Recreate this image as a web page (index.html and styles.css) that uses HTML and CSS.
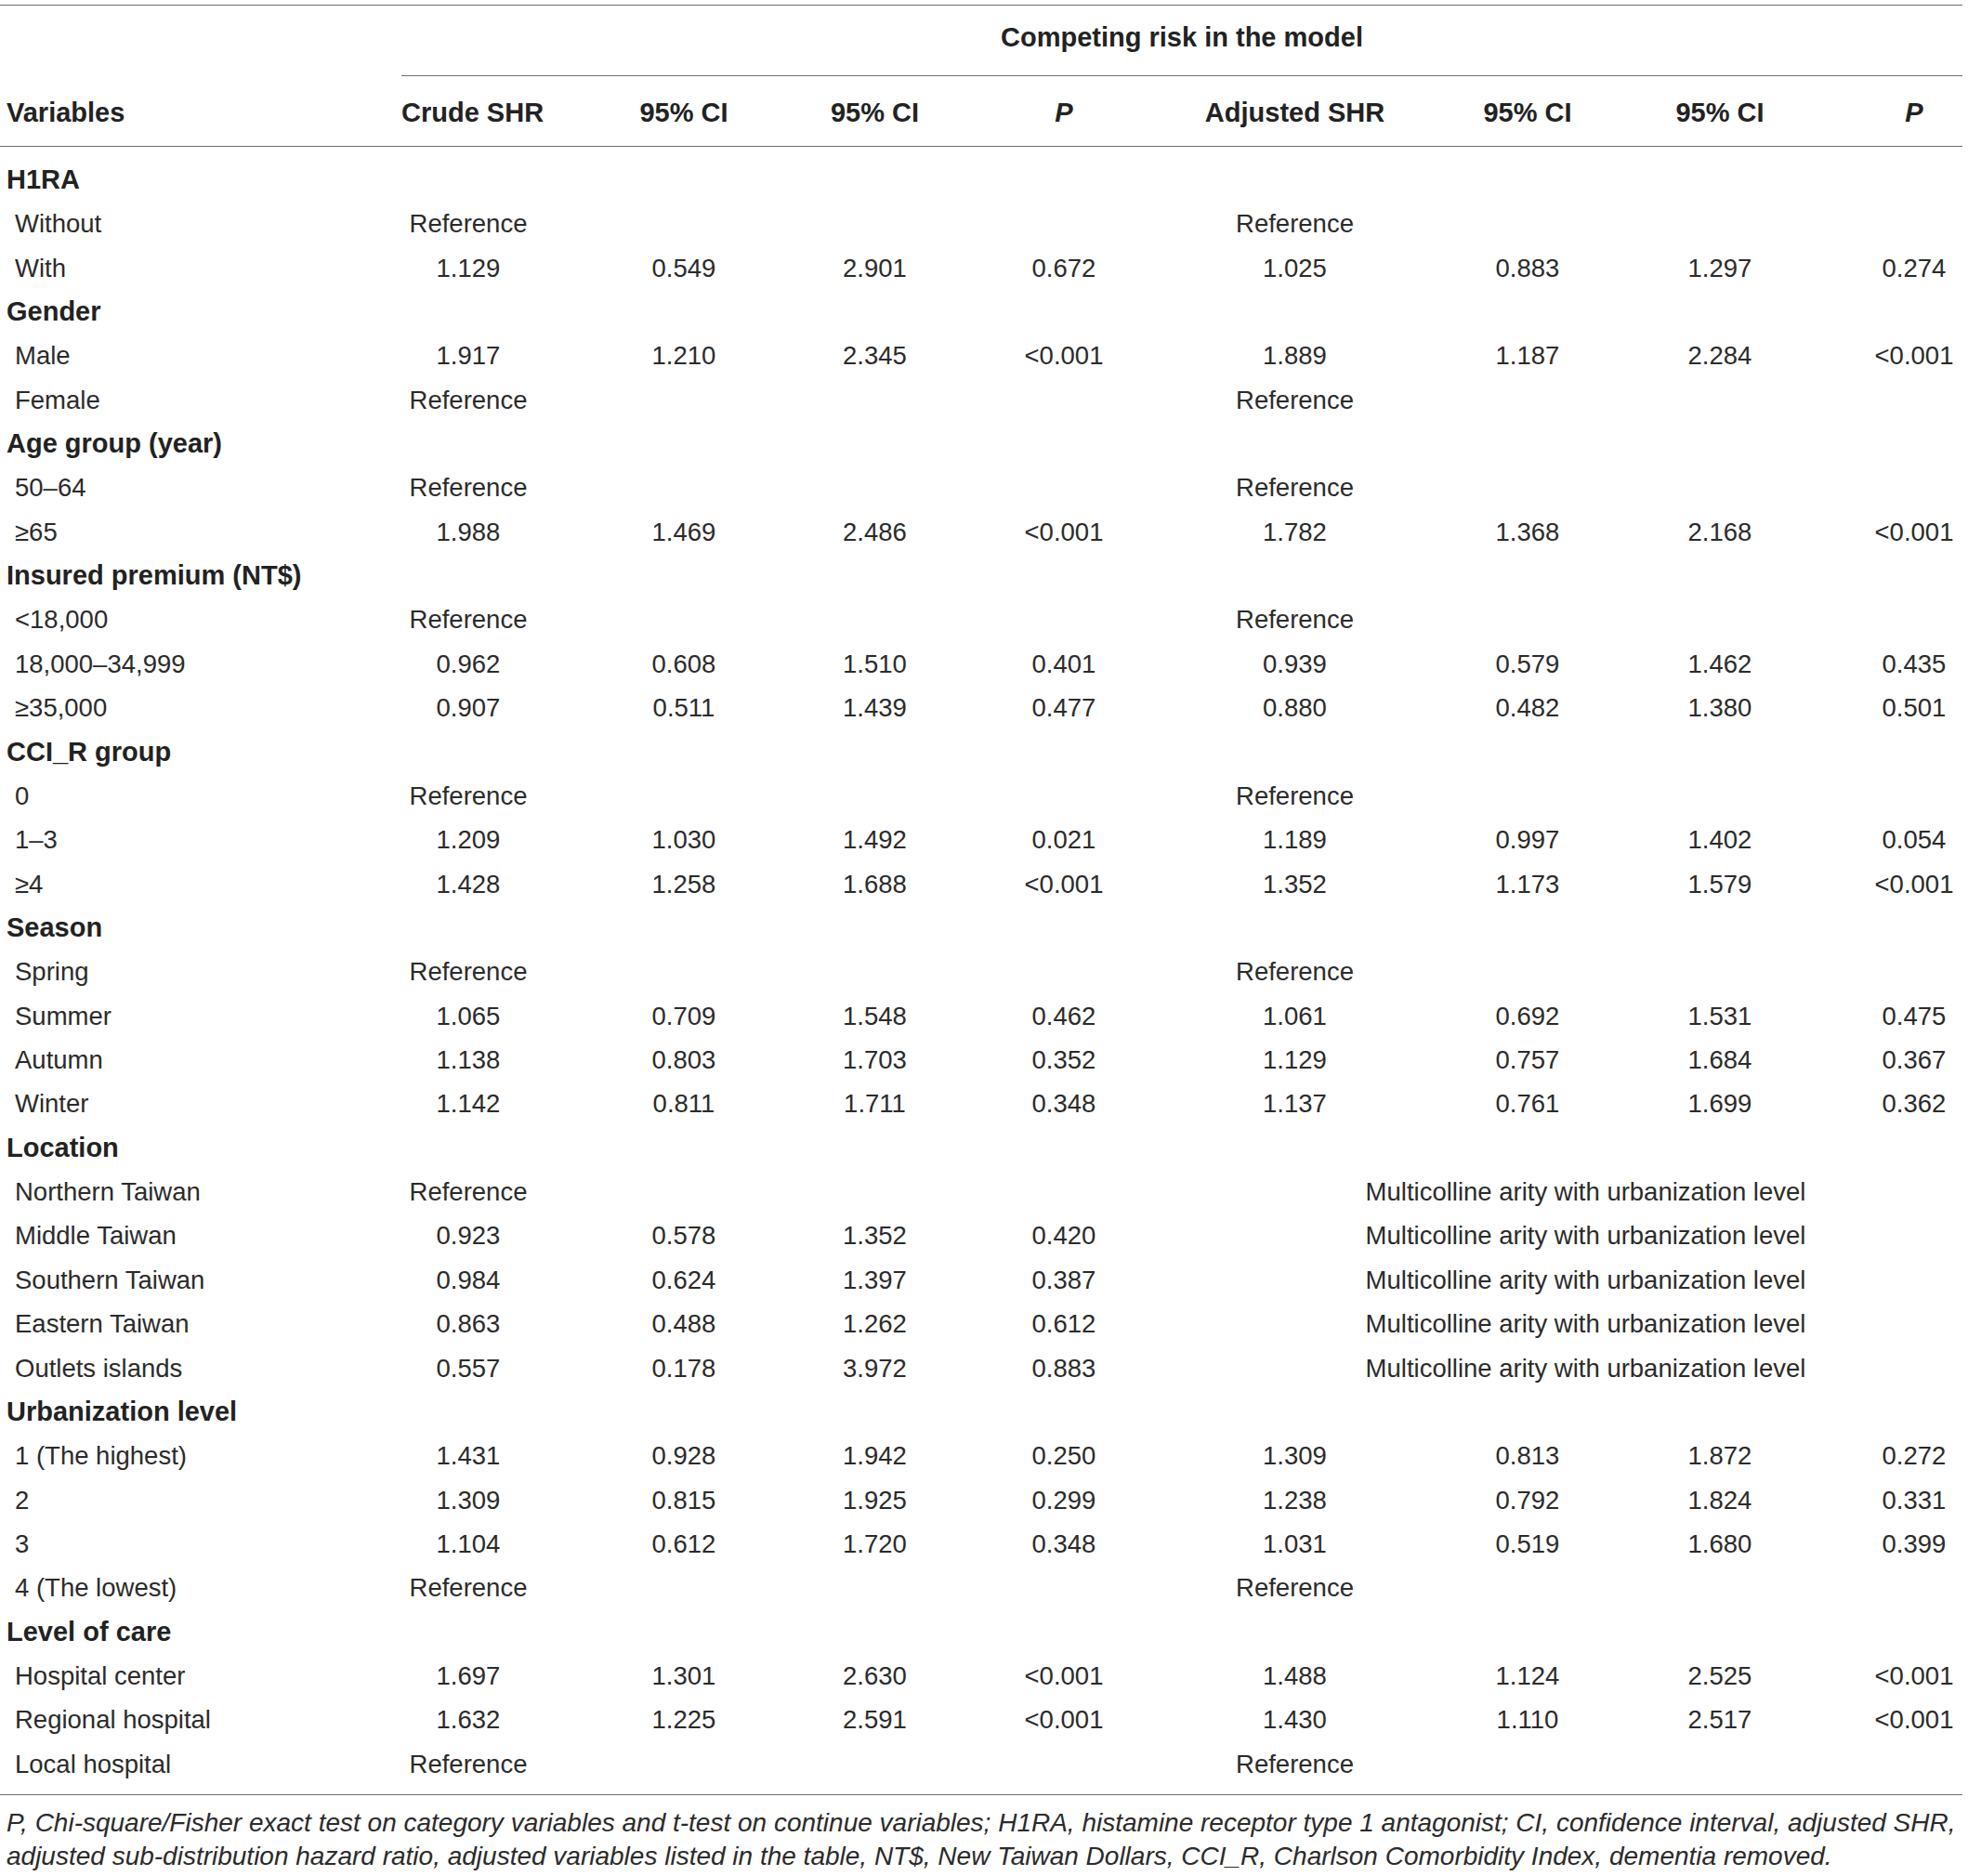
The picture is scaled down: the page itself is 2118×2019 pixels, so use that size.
FILE: index.html
```html
<!DOCTYPE html>
<html lang="en">
<head>
<meta charset="utf-8">
<title>Competing risk table</title>
<link rel="stylesheet" href="styles.css">
</head>
<body>
<div class="page">
  <div class="tbl">
    <div class="thead">
      <div class="row super">
        <div class="cell span-all bold">Competing risk in the model</div>
      </div>
      <div class="row head">
        <div class="cell c1 bold">Variables</div>
        <div class="cell c2 bold">Crude SHR</div>
        <div class="cell c3 bold">95% CI</div>
        <div class="cell c4 bold">95% CI</div>
        <div class="cell c5 bold"><i>P</i></div>
        <div class="cell c6 bold">Adjusted SHR</div>
        <div class="cell c7 bold">95% CI</div>
        <div class="cell c8 bold">95% CI</div>
        <div class="cell c9 bold"><i>P</i></div>
      </div>
    </div>
    <div class="tbody">
      <div class="row"><div class="cell cat">H1RA</div></div>
      <div class="row"><div class="cell item">Without</div><div class="cell c2">Reference</div><div class="cell c6">Reference</div></div>
      <div class="row"><div class="cell item">With</div><div class="cell c2">1.129</div><div class="cell c3">0.549</div><div class="cell c4">2.901</div><div class="cell c5">0.672</div><div class="cell c6">1.025</div><div class="cell c7">0.883</div><div class="cell c8">1.297</div><div class="cell c9">0.274</div></div>

      <div class="row"><div class="cell cat">Gender</div></div>
      <div class="row"><div class="cell item">Male</div><div class="cell c2">1.917</div><div class="cell c3">1.210</div><div class="cell c4">2.345</div><div class="cell c5">&lt;0.001</div><div class="cell c6">1.889</div><div class="cell c7">1.187</div><div class="cell c8">2.284</div><div class="cell c9">&lt;0.001</div></div>
      <div class="row"><div class="cell item">Female</div><div class="cell c2">Reference</div><div class="cell c6">Reference</div></div>

      <div class="row"><div class="cell cat">Age group (year)</div></div>
      <div class="row"><div class="cell item">50–64</div><div class="cell c2">Reference</div><div class="cell c6">Reference</div></div>
      <div class="row"><div class="cell item">≥65</div><div class="cell c2">1.988</div><div class="cell c3">1.469</div><div class="cell c4">2.486</div><div class="cell c5">&lt;0.001</div><div class="cell c6">1.782</div><div class="cell c7">1.368</div><div class="cell c8">2.168</div><div class="cell c9">&lt;0.001</div></div>

      <div class="row"><div class="cell cat">Insured premium (NT$)</div></div>
      <div class="row"><div class="cell item">&lt;18,000</div><div class="cell c2">Reference</div><div class="cell c6">Reference</div></div>
      <div class="row"><div class="cell item">18,000–34,999</div><div class="cell c2">0.962</div><div class="cell c3">0.608</div><div class="cell c4">1.510</div><div class="cell c5">0.401</div><div class="cell c6">0.939</div><div class="cell c7">0.579</div><div class="cell c8">1.462</div><div class="cell c9">0.435</div></div>
      <div class="row"><div class="cell item">≥35,000</div><div class="cell c2">0.907</div><div class="cell c3">0.511</div><div class="cell c4">1.439</div><div class="cell c5">0.477</div><div class="cell c6">0.880</div><div class="cell c7">0.482</div><div class="cell c8">1.380</div><div class="cell c9">0.501</div></div>

      <div class="row"><div class="cell cat">CCI_R group</div></div>
      <div class="row"><div class="cell item">0</div><div class="cell c2">Reference</div><div class="cell c6">Reference</div></div>
      <div class="row"><div class="cell item">1–3</div><div class="cell c2">1.209</div><div class="cell c3">1.030</div><div class="cell c4">1.492</div><div class="cell c5">0.021</div><div class="cell c6">1.189</div><div class="cell c7">0.997</div><div class="cell c8">1.402</div><div class="cell c9">0.054</div></div>
      <div class="row"><div class="cell item">≥4</div><div class="cell c2">1.428</div><div class="cell c3">1.258</div><div class="cell c4">1.688</div><div class="cell c5">&lt;0.001</div><div class="cell c6">1.352</div><div class="cell c7">1.173</div><div class="cell c8">1.579</div><div class="cell c9">&lt;0.001</div></div>

      <div class="row"><div class="cell cat">Season</div></div>
      <div class="row"><div class="cell item">Spring</div><div class="cell c2">Reference</div><div class="cell c6">Reference</div></div>
      <div class="row"><div class="cell item">Summer</div><div class="cell c2">1.065</div><div class="cell c3">0.709</div><div class="cell c4">1.548</div><div class="cell c5">0.462</div><div class="cell c6">1.061</div><div class="cell c7">0.692</div><div class="cell c8">1.531</div><div class="cell c9">0.475</div></div>
      <div class="row"><div class="cell item">Autumn</div><div class="cell c2">1.138</div><div class="cell c3">0.803</div><div class="cell c4">1.703</div><div class="cell c5">0.352</div><div class="cell c6">1.129</div><div class="cell c7">0.757</div><div class="cell c8">1.684</div><div class="cell c9">0.367</div></div>
      <div class="row"><div class="cell item">Winter</div><div class="cell c2">1.142</div><div class="cell c3">0.811</div><div class="cell c4">1.711</div><div class="cell c5">0.348</div><div class="cell c6">1.137</div><div class="cell c7">0.761</div><div class="cell c8">1.699</div><div class="cell c9">0.362</div></div>

      <div class="row"><div class="cell cat">Location</div></div>
      <div class="row"><div class="cell item">Northern Taiwan</div><div class="cell c2">Reference</div><div class="cell multi">Multicolline arity with urbanization level</div></div>
      <div class="row"><div class="cell item">Middle Taiwan</div><div class="cell c2">0.923</div><div class="cell c3">0.578</div><div class="cell c4">1.352</div><div class="cell c5">0.420</div><div class="cell multi">Multicolline arity with urbanization level</div></div>
      <div class="row"><div class="cell item">Southern Taiwan</div><div class="cell c2">0.984</div><div class="cell c3">0.624</div><div class="cell c4">1.397</div><div class="cell c5">0.387</div><div class="cell multi">Multicolline arity with urbanization level</div></div>
      <div class="row"><div class="cell item">Eastern Taiwan</div><div class="cell c2">0.863</div><div class="cell c3">0.488</div><div class="cell c4">1.262</div><div class="cell c5">0.612</div><div class="cell multi">Multicolline arity with urbanization level</div></div>
      <div class="row"><div class="cell item">Outlets islands</div><div class="cell c2">0.557</div><div class="cell c3">0.178</div><div class="cell c4">3.972</div><div class="cell c5">0.883</div><div class="cell multi">Multicolline arity with urbanization level</div></div>

      <div class="row"><div class="cell cat">Urbanization level</div></div>
      <div class="row"><div class="cell item">1 (The highest)</div><div class="cell c2">1.431</div><div class="cell c3">0.928</div><div class="cell c4">1.942</div><div class="cell c5">0.250</div><div class="cell c6">1.309</div><div class="cell c7">0.813</div><div class="cell c8">1.872</div><div class="cell c9">0.272</div></div>
      <div class="row"><div class="cell item">2</div><div class="cell c2">1.309</div><div class="cell c3">0.815</div><div class="cell c4">1.925</div><div class="cell c5">0.299</div><div class="cell c6">1.238</div><div class="cell c7">0.792</div><div class="cell c8">1.824</div><div class="cell c9">0.331</div></div>
      <div class="row"><div class="cell item">3</div><div class="cell c2">1.104</div><div class="cell c3">0.612</div><div class="cell c4">1.720</div><div class="cell c5">0.348</div><div class="cell c6">1.031</div><div class="cell c7">0.519</div><div class="cell c8">1.680</div><div class="cell c9">0.399</div></div>
      <div class="row"><div class="cell item">4 (The lowest)</div><div class="cell c2">Reference</div><div class="cell c6">Reference</div></div>

      <div class="row"><div class="cell cat">Level of care</div></div>
      <div class="row"><div class="cell item">Hospital center</div><div class="cell c2">1.697</div><div class="cell c3">1.301</div><div class="cell c4">2.630</div><div class="cell c5">&lt;0.001</div><div class="cell c6">1.488</div><div class="cell c7">1.124</div><div class="cell c8">2.525</div><div class="cell c9">&lt;0.001</div></div>
      <div class="row"><div class="cell item">Regional hospital</div><div class="cell c2">1.632</div><div class="cell c3">1.225</div><div class="cell c4">2.591</div><div class="cell c5">&lt;0.001</div><div class="cell c6">1.430</div><div class="cell c7">1.110</div><div class="cell c8">2.517</div><div class="cell c9">&lt;0.001</div></div>
      <div class="row"><div class="cell item">Local hospital</div><div class="cell c2">Reference</div><div class="cell c6">Reference</div></div>
    </div>
  </div>
  <p class="note"><i>P</i>, Chi-square/Fisher exact test on category variables and t-test on continue variables; H1RA, histamine receptor type 1 antagonist; CI, confidence interval, adjusted SHR,<br>adjusted sub-distribution hazard ratio, adjusted variables listed in the table, NT$, New Taiwan Dollars, CCI_R, Charlson Comorbidity Index, dementia removed.</p>
</div>
</body>
</html>
```

FILE: styles.css
```css
html, body {
  margin: 0;
  padding: 0;
  background: #ffffff;
}

.page {
  width: 2112px;
  padding-top: 5px;
  font-family: "Liberation Sans", Arial, Helvetica, sans-serif;
  font-size: 27.5px;
  color: #2b2b2b;
}

.tbl {
  border-top: 1px solid #6e6e6e;
  border-bottom: 1px solid #6e6e6e;
}

.row {
  display: grid;
  grid-template-columns: 432px 188px 219px 205px 225px 249px 229px 208px 157px;
  height: 47.36px;
  align-items: center;
}

.cell {
  white-space: nowrap;
  text-align: center;
  line-height: 1.15;
}

.bold {
  font-weight: 700;
  font-size: 29px;
  color: #222222;
}

.super {
  height: 76px;
}

.super .span-all {
  grid-column: 2 / 10;
  align-self: stretch;
  display: flex;
  align-items: center;
  justify-content: center;
  padding-bottom: 6px;
  border-bottom: 1px solid #6e6e6e;
}

.head {
  padding-top: 5px;
  box-sizing: border-box;
  border-bottom: 1px solid #6e6e6e;
  height: 76px;
}

.tbody {
  padding-top: 12px;
  padding-bottom: 9px;
}

.c1 { grid-column: 1; text-align: left; padding-left: 7px; }
.c2 { grid-column: 2; padding-right: 44px; }
.c3 { grid-column: 3; padding-left: 13px; }
.c4 { grid-column: 4; }
.c5 { grid-column: 5; padding-right: 23px; }
.c6 { grid-column: 6; }
.c7 { grid-column: 7; padding-left: 23px; }
.c8 { grid-column: 8; }
.c9 { grid-column: 9; padding-left: 53px; }

.cat {
  grid-column: 1;
  text-align: left;
  padding-left: 7px;
  font-weight: 700;
  font-size: 29px;
  color: #222222;
}

.item {
  grid-column: 1;
  text-align: left;
  padding-left: 16px;
}

.multi {
  grid-column: 6 / 10;
  padding-left: 32px;
}

.note {
  margin: 12px 0 0 7px;
  font-style: italic;
  font-size: 28px;
  line-height: 36px;
  white-space: nowrap;
}
```
